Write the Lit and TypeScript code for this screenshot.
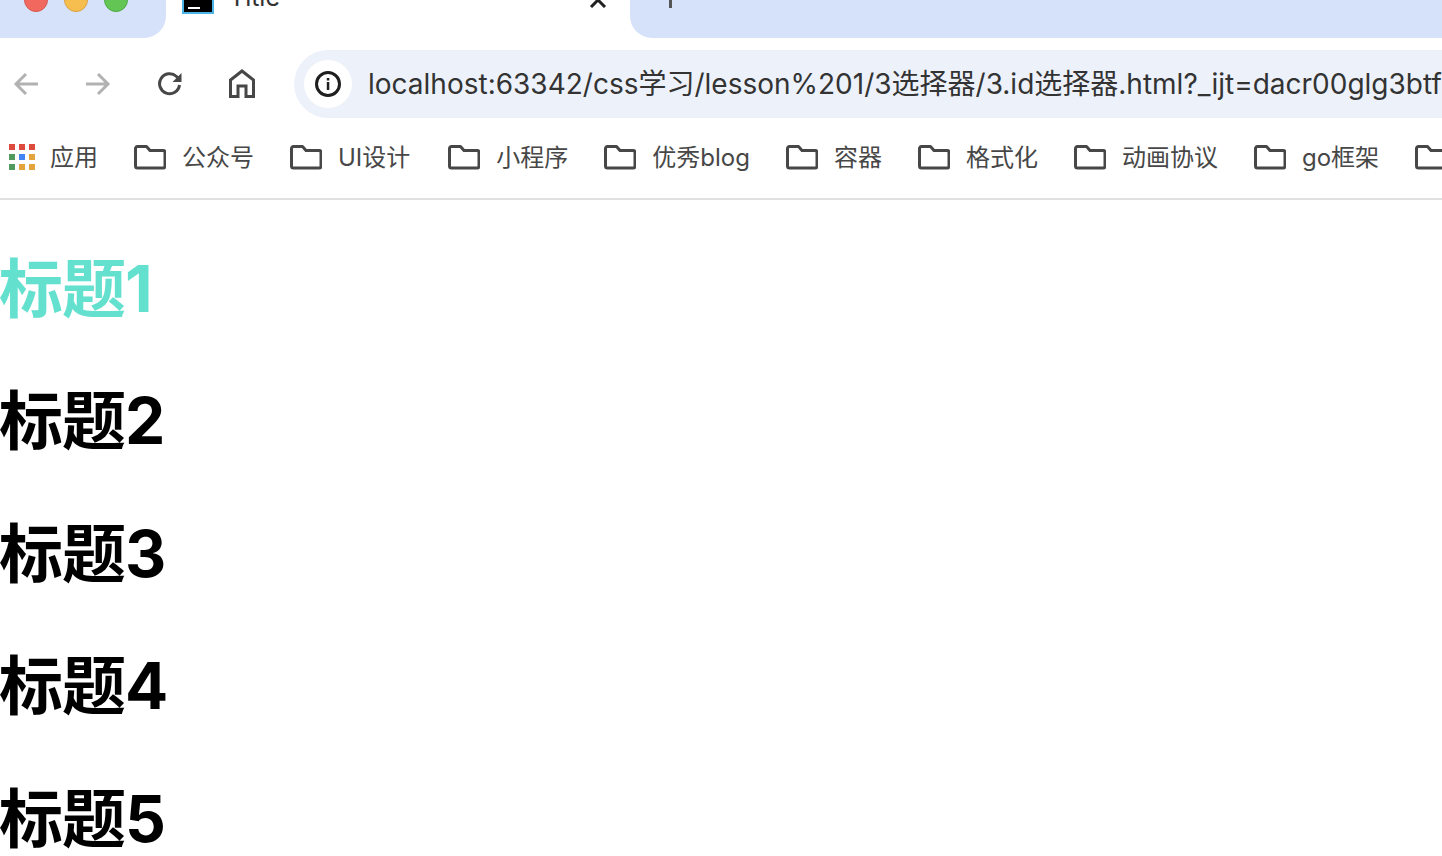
import { LitElement, html, css } from "lit";
import { customElement } from "lit/decorators.js";

const folder = html`<svg class="folder" width="32" height="26" viewBox="0 0 32 26"><path d="M1.500 4.500a2 2 0 0 1 2-2h9l3.500 4h13a2 2 0 0 1 2 2v13.500a2 2 0 0 1-2 2h-25.500a2 2 0 0 1-2-2z" fill="none" stroke="#474747" stroke-width="3" stroke-linejoin="round"/></svg>`;

const appColors = ["#dc4b3e", "#dc4b3e", "#dc4b3e", "#4f9a5c", "#4285f4", "#e3a43c", "#4f9a5c", "#e3a43c", "#e3a43c"];

const bookmarks = ["公众号", "UI设计", "小程序", "优秀blog", "容器", "格式化", "动画协议", "go框架", ""];
const headings = ["标题1", "标题2", "标题3", "标题4", "标题5"];

@customElement("app-root")
export class AppRoot extends LitElement {
  static styles = css`
    :host { display: block; width: 1442px; height: 856px; overflow: hidden; background: #fff;
      font-family: "Inter", "Noto Sans CJK SC", sans-serif; }
    .strip { height: 38px; display: flex; overflow: hidden; background: #fff; }
    .left { width: 166px; height: 38px; background: #d6e2fa; border-bottom-right-radius: 22px; display: flex; gap: 16px; padding-left: 24px; box-sizing: border-box; flex: none; }
    .light { width: 24px; height: 24px; border-radius: 50%; margin-top: -12px; box-sizing: border-box; border: 1px solid; }
    .red { background: #f0685e; border-color: #d5584f; }
    .yellow { background: #f6bd4f; border-color: #d9a344; }
    .green { background: #62c554; border-color: #52a846; }
    .tab { width: 464px; flex: none; height: 38px; display: flex; padding-left: 16px; box-sizing: border-box; position: relative; }
    .favicon { width: 32px; height: 14px; background: #000; border: solid #4db4e6; border-width: 0 2px 2px; box-sizing: border-box; display: flex; align-items: flex-end; padding: 0 0 3px 4px; }
    .favicon i { display: block; width: 12px; height: 2px; background: #fff; }
    .title { margin: -17px 0 0 15px; font-size: 25px; line-height: 28px; color: #333; }
    .close { position: absolute; left: 422px; top: -8px; }
    .right { flex: 1; height: 38px; background: #d6e2fa; border-bottom-left-radius: 22px; padding-left: 39px; }
    .plus { display: block; width: 3px; height: 8px; background: #555; }
    .toolbar { height: 92px; display: flex; align-items: center; padding-left: 2px; }
    .btn { width: 48px; height: 48px; margin-right: 24px; display: flex; align-items: center; justify-content: center; flex: none; }
    .omni { margin-left: 4px; flex: none; width: 1148px; height: 68px; background: #edf2fa; border-radius: 34px 0 0 34px; display: flex; align-items: center; padding-left: 10px; box-sizing: border-box; overflow: hidden; }
    .info { width: 48px; height: 48px; border-radius: 50%; background: #fff; display: flex; align-items: center; justify-content: center; flex: none; }
    .url { margin: -4px 0 0 16px; font-size: 28px; color: #333; white-space: nowrap; }
    .bookmarks { height: 70px; box-sizing: border-box; border-bottom: 2px solid #e0e0e0; display: flex; align-items: flex-start; padding: 14px 0 0 8px; gap: 36px; overflow: hidden; }
    .bm { display: flex; align-items: center; gap: 16px; height: 28px; font-size: 24px; color: #474747; white-space: nowrap; flex: none; }
    .bm:first-child { gap: 15px; }
    .bm:nth-child(3) { margin-right: 2px; }
    .bm span:last-child { margin-top: -5px; }
    .folder { margin-top: -2px; }
    .apps { display: grid; grid-template-columns: repeat(3, 6px); gap: 4px; padding-left: 1px; margin-top: -2px; }
    .apps i { display: block; width: 6px; height: 6px; }
    .content { padding-top: 1px; }
    h1 { margin: 0.67em 0 0.67em -1px; font-size: 64px; line-height: 89.6px; font-weight: 700; letter-spacing: -1px; color: #000; white-space: nowrap; }
    h1.first { color: #64e0cf; }
  `;

  render() {
    return html`
      <div class="strip">
        <div class="left"><span class="light red"></span><span class="light yellow"></span><span class="light green"></span></div>
        <div class="tab">
          <span class="favicon"><i></i></span>
          <span class="title">Title</span>
          <svg class="close" width="20" height="16" viewBox="0 0 20 16"><path d="M3 15L10 8L17 15" fill="none" stroke="#222" stroke-width="3"/></svg>
        </div>
        <div class="right"><span class="plus"></span></div>
      </div>
      <div class="toolbar">
        <div class="btn"><svg width="26" height="26" viewBox="0 0 26 26"><path d="M25 13H3M13 3L3 13L13 23" fill="none" stroke="#b2b2b2" stroke-width="3"/></svg></div>
        <div class="btn"><svg width="26" height="26" viewBox="0 0 26 26"><path d="M1 13H23M13 3L23 13L13 23" fill="none" stroke="#b2b2b2" stroke-width="3"/></svg></div>
        <div class="btn"><svg width="26" height="26" viewBox="0 0 26 26"><path d="M22.500 14a10 10 0 1 1-3-8.500L23 9" fill="none" stroke="#474747" stroke-width="3"/><path d="M24.500 2v9h-9z" fill="#474747"/></svg></div>
        <div class="btn"><svg width="26" height="30" viewBox="0 0 26 30"><path d="M1.500 27.500V11L13 2l11.500 9v16.500H17V17H9v10.500z" fill="none" stroke="#474747" stroke-width="3"/></svg></div>
        <div class="omni">
          <div class="info"><svg width="26" height="26" viewBox="0 0 26 26"><circle cx="13" cy="13" r="11.500" fill="none" stroke="#1f1f1f" stroke-width="3"/><rect x="11.800" y="11" width="2.500" height="8" fill="#1f1f1f"/><rect x="11.800" y="7" width="2.500" height="2.500" fill="#1f1f1f"/></svg></div>
          <span class="url">localhost:63342/css学习/lesson%201/3选择器/3.id选择器.html?_ijt=dacr00glg3btf</span>
        </div>
      </div>
      <div class="bookmarks">
        <div class="bm"><span class="apps">${appColors.map((c) => html`<i style="background:${c}"></i>`)}</span><span>应用</span></div>
        ${bookmarks.map((b) => html`<div class="bm">${folder}<span>${b}</span></div>`)}
      </div>
      <div class="content">
        ${headings.map((h, i) => html`<h1 class=${i === 0 ? "first" : ""}>${h}</h1>`)}
      </div>
    `;
  }
}
